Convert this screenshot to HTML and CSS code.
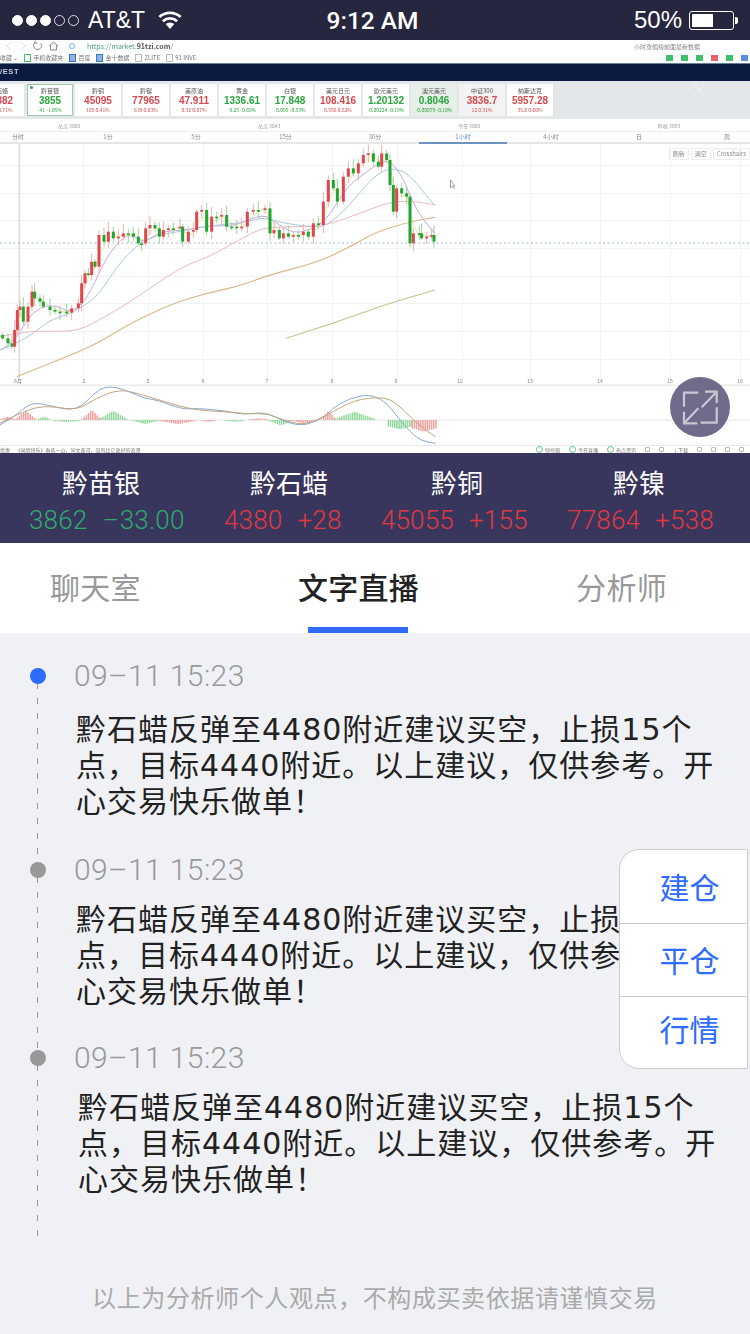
FILE: index.html
```html
<!DOCTYPE html>
<html lang="zh-CN">
<head>
  <meta charset="UTF-8" />
  <meta name="viewport" content="width=device-width, initial-scale=1.0" />
  <title>文字直播</title>
  <link rel="stylesheet" href="styles.css">
</head>
<body>
  <header class="status-bar">
    <div class="status-left">
      <span class="signal">
        <i class="on"></i><i class="on"></i><i class="on"></i><i></i><i></i>
      </span>
      <span class="carrier">AT&amp;T</span>
      <svg class="wifi" width="24" height="18" viewBox="0 0 26 19.500">
        <path d="M13 19.500 L8.300 14.200 A7 7 0 0 1 17.700 14.200 Z" fill="#fff"/>
        <path d="M5.300 11 A11.500 11.500 0 0 1 20.700 11 M1.500 6.500 A17 17 0 0 1 24.500 6.500" fill="none" stroke="#fff" stroke-width="3"/>
      </svg>
    </div>
    <div class="clock">9:12 AM</div>
    <div class="status-right">
      <span class="percent">50%</span>
      <span class="battery"><span class="battery-level"></span></span>
      <span class="battery-nub"></span>
    </div>
  </header>

  <section class="shot">
    <div class="browser-bar">
      <svg class="browser-nav" width="60" height="12" viewBox="0 0 60 12" fill="none" stroke-width="1">
        <path d="M11 2 L7 6 L11 10 M21 2 L25 6 L21 10" stroke="#ddd"/>
        <path d="M35 2.500 A4 4 0 1 0 41 3.500 M35 .5 V3 H37.500 M49 6 L53.500 2 L58 6 M50.500 5.500 V10 H56.500 V5.500" stroke="#888"/>
      </svg>
      <i class="url-dot"></i>
      <span class="browser-url">https://market.<b>91tzi.com</b>/</span>
      <span class="browser-tools">小时涨幅榜前面最新数据</span>
    </div>
    <div class="bookmark-bar">
      <span>收藏 ⌄</span>
      <span class="mark">手机收藏夹</span>
      <span class="mark mark-blue">百度</span>
      <span class="mark mark-blue">金十数据</span>
      <span class="mark mark-grey">ZLITE</span>
      <span class="mark mark-grey">91 INVE</span>
      <span class="bookmark-icons"><i></i><i></i><i></i><i class="red"></i><i></i><i class="blue"></i></span>
    </div>
    <div class="site-bar">/EST</div>
    <div class="ticker">
      <div class="card card-first"><p>石蜡</p><b class="up">4382</b><small class="up">32 0.71%</small></div>
      <div class="card card-on"><p>黔苗银</p><b class="down">3855</b><small class="down">-41 -1.05%</small></div>
      <div class="card"><p>黔铜</p><b class="up">45095</b><small class="up">185 0.41%</small></div>
      <div class="card"><p>黔镍</p><b class="up">77965</b><small class="up">639 0.83%</small></div>
      <div class="card"><p>美原油</p><b class="up">47.911</b><small class="up">0.32 0.67%</small></div>
      <div class="card"><p>黄金</p><b class="down">1336.61</b><small class="down">-9.25 -0.69%</small></div>
      <div class="card"><p>白银</p><b class="down">17.848</b><small class="down">-0.095 -0.53%</small></div>
      <div class="card"><p>美元日元</p><b class="up">108.416</b><small class="up">0.556 0.52%</small></div>
      <div class="card"><p>欧元美元</p><b class="down">1.20132</b><small class="down">-0.00224 -0.19%</small></div>
      <div class="card card-tint"><p>澳元美元</p><b class="down">0.8046</b><small class="down">-0.00079 -0.10%</small></div>
      <div class="card card-grey"><p>中证300</p><b class="up">3836.7</b><small class="up">12 0.31%</small></div>
      <div class="card"><p>纳斯达克</p><b class="up">5957.28</b><small class="up">35.8 0.60%</small></div>
    </div>
    <div class="points">
      <span>总点 3889</span><span>总点 3843</span><span>今日 3889</span><span>昨收 3893</span>
    </div>
    <div class="periods">
      <span>分时</span><span>1分</span><span>5分</span><span>15分</span><span>30分</span>
      <span class="period-on">1小时</span><span>4小时</span><span>日</span><span>周</span>
    </div>
    <svg id="chart" class="chart" width="750" height="301" viewBox="0 144 750 301"></svg>
    <div class="shot-foot">
      <span>优惠 &nbsp; &nbsp; 《闲情快乐》春色一山，同文黄河，没有比它更好的浪漫</span>
      <span class="foot-tools">
        <span class="foot-tag">快剪辑</span><span class="foot-tag">今日直播</span><span class="foot-tag">热点资讯</span>
        <span class="foot-icon"></span><span class="foot-icon"></span><span>↓下载</span>
        <span class="foot-icon"></span><span class="foot-icon"></span><span class="foot-icon"></span><span class="foot-icon"></span>
      </span>
    </div>
    <svg class="shot-close" width="16" height="16" viewBox="0 0 16 16">
      <path d="M1 1 L15 15 M15 1 L1 15" stroke="#f2f4f6" stroke-width="1"/>
    </svg>
    <div class="chart-btns"><span>刷新</span><span>满空</span><span>Crosshairs</span></div>
    <button class="expand" type="button" aria-label="全屏">
      <svg width="36" height="36" viewBox="0 0 36 36" fill="none" stroke="#c9c8d2" stroke-width="2.200">
        <path d="M16.300 3.700 H2 V17.700 M18.700 33.700 H34.700 V18.300 M23 2.700 H34.700 V14 M34.700 2.700 L19.700 18.300 M2 22.700 V34.300 H15.300 M2 34.300 L16.300 19.300"/>
      </svg>
    </button>
  </section>

  <section class="quotes">
    <div class="quote-names">
      <span>黔苗银</span><span>黔石蜡</span><span>黔铜</span><span>黔镍</span>
    </div>
    <div class="quote-values">
      <span class="fall">3862<em>–33.00</em></span>
      <span class="rise">4380<em>+28</em></span>
      <span class="rise">45055<em>+155</em></span>
      <span class="rise">77864<em>+538</em></span>
    </div>
  </section>

  <nav class="tabs">
    <a>聊天室</a>
    <a class="active">文字直播</a>
    <a>分析师</a>
  </nav>

  <main class="feed">
    <ul class="timeline">
      <li class="post post-new">
        <time>09–11 15:23</time>
        <p>黔石蜡反弹至4480附近建议买空，止损15个点，目标4440附近。以上建议，仅供参考。开心交易快乐做单！</p>
      </li>
      <li class="post">
        <time>09–11 15:23</time>
        <p>黔石蜡反弹至4480附近建议买空，止损15个点，目标4440附近。以上建议，仅供参考。开心交易快乐做单！</p>
      </li>
      <li class="post post-last">
        <time>09–11 15:23</time>
        <p>黔石蜡反弹至4480附近建议买空，止损15个点，目标4440附近。以上建议，仅供参考。开心交易快乐做单！</p>
      </li>
    </ul>
    <footer class="note">以上为分析师个人观点，不构成买卖依据请谨慎交易</footer>
  </main>

  <aside class="side-menu">
    <a>建仓</a>
    <a>平仓</a>
    <a>行情</a>
  </aside>

  <script src="chart.js"></script>
</body>
</html>
```

FILE: styles.css
```css
* {
  box-sizing: border-box;
  margin: 0;
  padding: 0;
}

html, body {
  width: 750px;
  height: 1334px;
  overflow: hidden;
}

body {
  position: relative;
  background-color: #f0f1f4;
  color: #222;
  font-family: 'Noto Sans CJK SC', 'Liberation Sans', sans-serif;
}

/* status bar */
.status-bar {
  display: grid;
  grid-template-columns: 1fr auto 1fr;
  align-items: center;
  height: 40px;
  padding: 0 12px;
  background-color: #26263f;
  color: #fff;
  font-family: 'Liberation Sans', sans-serif;
  font-size: 24px;
}

.status-left {
  display: flex;
  align-items: center;
}

.signal {
  display: flex;
  gap: 3px;
}

.signal i {
  width: 11px;
  height: 11px;
  border: 1px solid #ddd;
  border-radius: 50%;
}

.signal i.on {
  border-color: #fff;
  background-color: #fff;
}

.carrier {
  margin-left: 9px;
  font-size: 23px;
}

.wifi {
  margin-left: 13px;
}

.clock {
  margin-right: 5px;
  font-family: Roboto, 'Liberation Sans', sans-serif;
  font-size: 24.500px;
  font-weight: 500;
}

.status-right {
  display: flex;
  align-items: center;
  justify-content: flex-end;
}

.battery {
  width: 45px;
  height: 19px;
  margin-left: 7px;
  padding: 2px;
  border: 1px solid #fff;
  border-radius: 3px;
}

.battery-level {
  display: block;
  width: 21px;
  height: 100%;
  background-color: #fff;
}

.battery-nub {
  width: 3px;
  height: 7px;
  margin-left: 1px;
  border-radius: 0 2px 2px 0;
  background-color: #fff;
}

/* the picture of the trading site */
.shot {
  position: relative;
  height: 413px;
  overflow: hidden;
  background-color: #fff;
  font-size: 6px;
  color: #777;
}

.browser-bar {
  display: flex;
  align-items: center;
  height: 12px;
  filter: blur(.4px);
}

.browser-nav {
  flex: none;
}

.url-dot {
  width: 6px;
  height: 6px;
  margin-left: 9px;
  margin-right: 12px;
  border: 1px solid #6fb2e6;
  border-radius: 50%;
}

.browser-url {
  font-size: 7px;
  color: #4f9c8a;
}

.browser-url b {
  color: #555;
}

.browser-tools {
  margin-left: auto;
  margin-right: 50px;
  color: #888;
}

.bookmark-bar {
  display: flex;
  align-items: center;
  gap: 6px;
  height: 12px;
  border-bottom: 1px solid #6b7f9c;
  filter: blur(.4px);
}

.mark {
  display: flex;
  align-items: center;
  gap: 2px;
}

.mark::before {
  content: "";
  width: 5px;
  height: 6px;
  border: 1px solid #3fbf6b;
}

.mark-blue::before {
  border-color: #3d74c8;
  background-color: #8fb2e6;
}

.mark-grey::before {
  border-color: #bbb;
}

.bookmark-icons {
  display: flex;
  gap: 8px;
  margin-left: auto;
  margin-right: 2px;
}

.bookmark-icons i {
  width: 7px;
  height: 6px;
  background-color: #3fbf6b;
}

.bookmark-icons i.red {
  background-color: #e8606a;
}

.bookmark-icons i.blue {
  background-color: #5a8fe0;
}

.site-bar {
  height: 17px;
  background-color: #0a1a40;
  color: #c6ccd8;
  font-family: 'Liberation Sans', sans-serif;
  font-size: 7.500px;
  font-weight: 700;
  letter-spacing: .6px;
  line-height: 16px;
  filter: blur(.3px);
}

.ticker {
  display: flex;
  gap: 2px;
  height: 38px;
  padding-top: 3px;
  background-color: #e4e7ea;
  filter: blur(.4px);
}

.card {
  flex: none;
  width: 46px;
  height: 32px;
  padding-top: 4px;
  background-color: #fff;
  text-align: center;
  line-height: 1;
  white-space: nowrap;
  overflow: hidden;
}

.card p {
  font-size: 6px;
  color: #555;
}

.card b {
  display: block;
  margin: 2px 0 1px;
  font-family: 'Liberation Sans', sans-serif;
  font-size: 10px;
}

.card small {
  display: block;
  font-size: 5px;
}

.card-first {
  width: 44px;
  margin-left: -20px;
  margin-right: 1px;
}

.card-on {
  position: relative;
  border: 1.500px solid #9ccca6;
  padding-top: 2.500px;
}

.card-on::before {
  content: "";
  position: absolute;
  top: 1px;
  left: 2px;
  width: 3px;
  height: 3px;
  border-radius: 50%;
  background-color: #2aa53f;
}

.card-tint {
  background-color: #e6efe8;
}

.card-grey {
  background-color: #f3f3f3;
}

.up {
  color: #d8494f;
}

.down {
  color: #2aa53f;
}

.points {
  display: grid;
  grid-template-columns: repeat(4, 200px);
  align-items: center;
  height: 12px;
  padding-left: 58px;
  color: #999;
  font-size: 5px;
  filter: blur(.3px);
}

.periods {
  display: grid;
  grid-template-columns: 64px 88px 88px 91px 88px 88px 88px 88px 88px;
  height: 13px;
  border-top: 1px solid #f0f0f0;
  border-bottom: 2px solid #e6e6e6;
  text-align: center;
  line-height: 10px;
  color: #888;
  filter: blur(.3px);
}

.periods span:first-child {
  margin-right: 28px;
}

.period-on {
  height: 12px;
  border-bottom: 2px solid #6c94bf;
  color: #5f8fc0;
}

.chart {
  display: block;
  filter: blur(.45px);
}

.chart text {
  font-family: 'Liberation Sans', sans-serif;
  font-size: 5px;
  fill: #888;
}

.shot-foot {
  display: flex;
  justify-content: space-between;
  height: 8px;
  padding-right: 6px;
  border-top: 1px solid #e8e8e8;
  line-height: 7px;
  color: #777;
  font-size: 5px;
  white-space: nowrap;
  filter: blur(.3px);
}

.foot-tools {
  display: flex;
  align-items: center;
  gap: 9px;
}

.foot-tag {
  display: flex;
  align-items: center;
  gap: 2px;
}

.foot-tag::before {
  content: "";
  width: 5px;
  height: 5px;
  border: 1px solid #5cbf7a;
  border-radius: 50%;
}

.foot-icon {
  width: 5px;
  height: 5px;
  border: 1px solid #bbb;
  border-radius: 1px;
}

.shot-close {
  position: absolute;
  top: 42px;
  left: 691px;
}

.chart-btns {
  position: absolute;
  top: 108px;
  right: 0;
  display: flex;
  gap: 2px;
  color: #888;
  filter: blur(.3px);
}

.chart-btns span {
  padding: 0 3px;
  line-height: 10px;
  border: 1px solid #eee;
}

.expand {
  position: absolute;
  top: 337px;
  left: 670px;
  display: flex;
  align-items: center;
  justify-content: center;
  width: 60px;
  height: 60px;
  border: 0;
  border-radius: 50%;
  background-color: #6e6b8b;
}

/* quote strip */
.quotes {
  height: 90px;
  padding-top: 12px;
  background-color: #38365d;
}

.quote-names {
  display: grid;
  grid-template-columns: 202px 174px 162px 202px;
  color: #fff;
  font-size: 26px;
  line-height: 34px;
  text-align: center;
}

.quote-values {
  display: flex;
  justify-content: space-between;
  margin-top: 4px;
  padding: 0 36px 0 29px;
  font-family: Roboto, 'Liberation Sans', sans-serif;
  font-size: 26px;
  font-weight: 300;
  letter-spacing: .2px;
  line-height: 34px;
}

.quote-values em {
  margin-left: 15px;
  font-style: normal;
}

.fall {
  color: #2eaa6e;
}

.rise {
  color: #e0393f;
}

/* tabs */
.tabs {
  display: flex;
  justify-content: space-between;
  height: 90px;
  padding: 0 83px 0 50px;
  background-color: #fff;
  font-size: 30px;
  letter-spacing: .3px;
  line-height: 86px;
  color: #999;
}

.tabs a {
  position: relative;
}

.tabs a.active {
  color: #222;
  font-weight: 500;
}

.tabs a.active::after {
  content: "";
  position: absolute;
  left: 10px;
  bottom: 0;
  width: 100px;
  height: 6px;
  background-color: #2e6bff;
}

/* live text feed */
.feed {
  padding-top: 26px;
}

.timeline {
  list-style: none;
  height: 576px;
}

.post {
  position: relative;
  height: 188px;
  padding: 0 29px 0 76px;
}

.post::before {
  content: "";
  position: absolute;
  left: 37px;
  top: 9px;
  bottom: -9px;
  width: 1px;
  background-image: repeating-linear-gradient(to bottom, #999 0 6px, transparent 6px 15px);
}

.post::after {
  content: "";
  position: absolute;
  left: 30px;
  top: 9px;
  width: 16px;
  height: 16px;
  border-radius: 50%;
  background-color: #999;
}

.post-new {
  height: 194px;
}

.post-new::after {
  background-color: #2e6bff;
}

.post-last {
  height: 194px;
  padding-left: 78px;
}

.post time {
  display: block;
  margin-left: -2px;
  font-family: Roboto, 'Liberation Sans', sans-serif;
  font-size: 30px;
  font-weight: 300;
  letter-spacing: .4px;
  line-height: 34px;
  color: #999;
}

.post-last time {
  margin-left: -4px;
}

.post p {
  margin-top: 15px;
  font-family: 'DejaVu Sans', 'Noto Sans CJK SC', sans-serif;
  font-size: 30px;
  letter-spacing: 1px;
  line-height: 36px;
  color: #222;
}

.post-new p {
  margin-top: 19px;
}

.note {
  margin-top: 44px;
  text-align: center;
  font-size: 24px;
  letter-spacing: .6px;
  line-height: 36px;
  color: #aaa;
}

/* floating trade menu */
.side-menu {
  position: absolute;
  top: 849px;
  right: 2px;
  display: grid;
  grid-template-rows: 73px 73px 72px;
  width: 129px;
  height: 220px;
  padding-left: 12px;
  border: 1px solid #ccc;
  border-radius: 20px 0 0 20px;
  background-color: #fff;
  color: #2e6bff;
  font-size: 30px;
  text-align: center;
  line-height: 72px;
}

.side-menu a + a {
  margin-left: -12px;
  padding-left: 12px;
  border-top: 1px solid #ccc;
  line-height: 70px;
}

.side-menu a:last-child {
  line-height: 62px;
}
```

FILE: chart.js
```js
// draws the candles and lines of the chart picture (points read off the screenshot, x and y times 3)
var NS = 'http://www.w3.org/2000/svg';
var svg = document.getElementById('chart');

function add(tag, attrs) {
  var el = document.createElementNS(NS, tag);
  for (var k in attrs) el.setAttribute(k, attrs[k]);
  svg.appendChild(el);
  return el;
}

// curve through the midpoints, so the lines don't look angular
function curve(pts, color, width) {
  var d = 'M' + pts[0][0].toFixed(1) + ' ' + pts[0][1].toFixed(1);
  for (var i = 1; i < pts.length - 1; i++) {
    var mx = (pts[i][0] + pts[i + 1][0]) / 2, my = (pts[i][1] + pts[i + 1][1]) / 2;
    d += ' Q' + pts[i][0].toFixed(1) + ' ' + pts[i][1].toFixed(1) + ' ' + mx.toFixed(1) + ' ' + my.toFixed(1);
  }
  var last = pts[pts.length - 1];
  d += ' L' + last[0].toFixed(1) + ' ' + last[1].toFixed(1);
  add('path', { d: d, fill: 'none', stroke: color, 'stroke-width': width || 1 });
}

function line(pts, color, width) {
  curve(pts.map(function (p) { return [p[0] / 3, 130 + p[1] / 3]; }), color, width);
}

// grid
[165, 193, 220, 248, 276, 303, 331, 359].forEach(function (y) {
  add('rect', { x: 0, y: y, width: 750, height: 1, fill: '#f1f2f3' });
});
[83, 148, 203, 267, 332, 397, 462, 530, 600, 670, 740].forEach(function (x) {
  add('rect', { x: x, y: 144, width: 1, height: 236, fill: '#f1f2f3' });
});
add('rect', { x: 18.500, y: 144, width: 1.500, height: 236, fill: '#dcdcdc' });
add('line', { x1: 0, y1: 243, x2: 750, y2: 243, stroke: '#9db9cc', 'stroke-width': 1, 'stroke-dasharray': '2 2.500' });

// closes
var closes = [[8,625],[24,640],[36,650],[44,600],[52,540],[60,530],[70,575],[84,530],[96,485],[104,505],[120,515],[130,530],[150,540],[165,545],[180,545],[200,548],[215,535],[235,520],[245,460],[255,430],[265,435],[275,395],[285,410],[297,315],[312,335],[325,305],[340,325],[355,320],[370,310],[385,310],[400,320],[415,340],[425,340],[437,295],[450,285],[465,295],[478,320],[490,300],[505,295],[520,295],[540,290],[548,335],[565,305],[580,300],[590,245],[605,240],[620,305],[635,260],[650,260],[665,255],[680,290],[695,290],[710,295],[725,290],[742,245],[760,240],[775,240],[795,235],[810,310],[822,300],[838,325],[850,310],[865,320],[880,315],[895,315],[910,305],[925,320],[940,280],[955,285],[970,215],[985,150],[1000,175],[1012,215],[1030,140],[1045,115],[1060,130],[1075,100],[1090,75],[1105,70],[1120,95],[1135,110],[1145,70],[1160,90],[1170,165],[1180,245],[1190,175],[1205,190],[1220,200],[1230,340],[1240,310],[1258,310],[1265,325],[1280,320],[1295,315],[1302,335]];

// lines under the candles
line(closes.map(function (c, i) {
  var a = closes[Math.max(i - 1, 0)], b = closes[Math.max(i - 2, 0)];
  return [c[0], (a[1] + b[1] + c[1]) / 3];
}), '#f2e4a0');
line([[0,660],[40,640],[80,570],[120,530],[170,525],[210,550],[260,510],[310,400],[350,340],[390,310],[430,340],[480,305],[560,300],[640,285],[700,290],[790,250],[830,280],[880,310],[930,300],[980,270],[1040,170],[1100,125],[1160,85],[1200,125],[1240,220],[1270,270],[1305,310]], '#c9a6de');
line([[0,660],[50,640],[100,610],[150,570],[200,555],[250,530],[300,490],[350,410],[410,345],[470,315],[540,305],[640,285],[720,280],[790,262],[830,275],[920,290],[980,290],[1050,225],[1110,150],[1160,115],[1210,120],[1250,160],[1305,228]], '#a9c8de');
line([[0,620],[60,608],[120,603],[225,605],[290,575],[400,510],[500,440],[570,400],[640,375],[760,305],[810,290],[960,290],[1040,265],[1130,230],[1180,215],[1240,213],[1305,225]], '#e8bcbc');
line([[50,740],[150,700],[230,668],[300,635],[400,575],[520,520],[620,490],[730,465],[800,437],[960,395],[1060,345],[1130,305],[1230,275],[1305,262]], '#d8b88c', 1.200);
line([[858,625],[1000,580],[1150,525],[1305,480]], '#c3c48f', 1.200);

// candles, red for a rise and green for a fall
closes.forEach(function (c, i) {
  var prev = i ? closes[i - 1][1] : c[1] - 10;
  var top = Math.min(prev, c[1]), bot = Math.max(prev, c[1]);
  if (bot - top < 5) bot = top + 5;
  var rise = c[1] < prev;
  var color = rise ? '#e0474c' : '#21a52f';
  var soft = rise ? '#eeb0b0' : '#9dd69d';
  var up = 8 + (i * 7) % 22, down = 5 + (i * 11) % 20;
  var x = c[0] / 3;
  add('rect', { x: x - 0.5, y: 130 + (top - up) / 3, width: 1, height: (bot - top + up + down) / 3, fill: soft });
  add('rect', { x: x - 1.500, y: 130 + top / 3, width: 3, height: (bot - top) / 3, fill: color });
});

// axis
add('rect', { x: 0, y: 384.500, width: 750, height: 1.500, fill: '#e9e9e9' });
[['6月',18],['2',84],['5',148],['6',203],['7',267],['8',332],['9',396],['12',460],['13',530],['14',600],['15',670],['16',740]].forEach(function (t) {
  var label = add('text', { x: t[1], y: 382.500, 'text-anchor': 'middle' });
  label.textContent = t[0];
});

// macd, points read with x times 2.09 and y times 3 from y 370
function macd(pts, color) {
  curve(pts.map(function (p) { return [p[0] / 2.09, 370 + p[1] / 3]; }), color, 1);
}
add('rect', { x: 0, y: 419.500, width: 750, height: 1.500, fill: '#eeeeee' });
var bars = [[0,30,8,'r',1],[30,75,25,'r',1],[75,105,8,'g',1],[110,165,4,'g',-1],[170,210,28,'r',1],[205,265,25,'g',1],[275,330,10,'g',-1],[330,410,10,'r',-1],[420,450,3,'r',-1],[470,510,3,'g',-1],[520,560,3,'r',1],[560,610,14,'g',-1],[610,660,8,'r',-1],[670,700,25,'r',1],[695,785,22,'g',1],[810,860,28,'g',-1],[860,910,35,'r',-1]];
bars.forEach(function (b) {
  for (var x = b[0]; x < b[1]; x += 4.500) {
    var t = (x - b[0]) / (b[1] - b[0]);
    var h = b[2] * (1 - Math.abs(2 * t - 1)) / 3 + 0.8;
    if (b[0] >= 810) h = b[2] / 3 * (1 - Math.abs(t - 0.5) * 0.6);
    add('rect', {
      x: x / 2.09, y: b[4] > 0 ? 420 - h : 420, width: 1.500, height: h,
      fill: b[3] === 'r' ? '#f2a0a0' : '#92d89c'
    });
  }
});
macd([[0,165],[30,140],[65,97],[100,105],[160,125],[200,65],[225,48],[260,58],[300,85],[330,90],[380,118],[415,115],[470,122],[510,135],[555,125],[600,160],[640,167],[680,140],[695,115],[730,85],[775,72],[810,100],[830,140],[860,190],[880,212],[910,220]], '#86a9d4');
macd([[0,160],[40,130],[90,105],[160,122],[200,85],[250,57],[300,75],[400,120],[470,125],[520,132],[560,130],[600,155],[640,165],[690,130],[740,90],[800,80],[830,100],[870,160],[910,200]], '#c4a57e');

// mouse pointer
add('path', { d: 'M450.500 180 V188 L452.500 186 L454.500 189 M452.500 186 H455 L450.500 180', fill: '#fff', stroke: '#666', 'stroke-width': 0.6 });
```
